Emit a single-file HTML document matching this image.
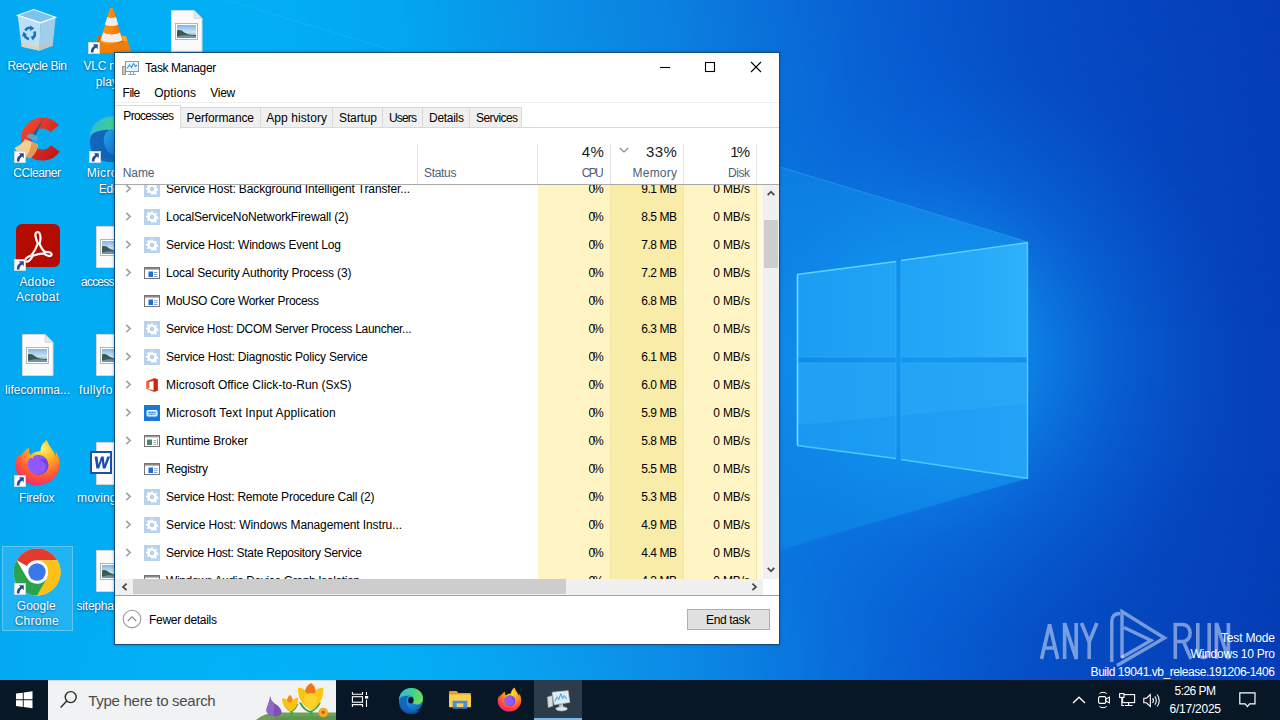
<!DOCTYPE html>
<html><head><meta charset="utf-8"><title>Task Manager</title>
<style>
*{box-sizing:border-box;margin:0;padding:0}
html,body{width:1280px;height:720px;overflow:hidden}
body{font-family:"Liberation Sans",sans-serif;position:relative;background:#0a6fdc;color:#000}
.layer{position:absolute;left:0;top:0;width:1280px;height:720px}
.t{position:absolute;white-space:pre;display:block}
.b{position:absolute;display:block}
svg{position:absolute;overflow:visible}
.dl{text-shadow:0 1px 2px rgba(0,20,60,.45),0 0 2px rgba(0,20,60,.3)}
</style></head>
<body>

<svg width="0" height="0" style="position:absolute"><defs>
<g id="i-gear"><rect width="16" height="16" fill="#b9d3ef"/>
<path fill="#fff" d="M7 2.6h2l.35 1.5 1 .42 1.3-.82 1.42 1.42-.82 1.3.42 1 1.5.35v2l-1.5.35-.42 1 .82 1.3-1.42 1.42-1.3-.82-1 .42L9 13.400H7l-.35-1.5-1-.42-1.3.82-1.420-1.420.82-1.300-.42-1-1.500-.35V7l1.500-.35.42-1-.82-1.300L4.350 3l1.300.82 1-.42z"/>
<circle cx="8" cy="8" r="2" fill="#9db4cc"/><circle cx="8" cy="8" r="1" fill="#dfe8f2"/></g>
<g id="i-win"><rect x=".5" y="2.500" width="15" height="11" fill="#fff" stroke="#757575"/><rect x="1" y="3" width="14" height="1.600" fill="#8a8a8a"/>
<rect x="4.500" y="6.500" width="4.500" height="5.500" fill="#1d6fd0"/><path d="M10 7.500h3.500M10 9.500h3.500M10 11.500h3.500" stroke="#8fa5c0" stroke-width="1"/></g>
<g id="i-broker"><rect x=".5" y="2.500" width="15" height="11" fill="#fff" stroke="#757575"/><rect x="1" y="3" width="14" height="1.400" fill="#9a9a9a"/>
<rect x="3" y="6.500" width="5" height="5.500" fill="#4f8474"/><path d="M9.500 7.500h2.500M9.500 9.500h2.500M9.500 11.500h2.500M13.500 6v6" stroke="#9aa7b4" stroke-width="1"/></g>
<g id="i-kbd"><rect width="16" height="16" fill="#1878d7"/><rect x="3" y="5.500" width="10" height="5.500" rx=".8" fill="#9fd0ff" stroke="#fff" stroke-width="1"/><path d="M4.500 7.500h7M5.500 9.300h5" stroke="#1878d7" stroke-width=".9" stroke-dasharray="1 .7"/></g>
<g id="i-office"><path d="M2.500 4.200L9.800 1.200l3.900 1.100v11.400l-3.900 1.100-7.300-2.800 7.100.9V3.900L5.200 5v6l-2.700 1z" fill="#e2401c"/><path d="M9.800 1.200l3.900 1.100v11.400l-3.900 1.100z" fill="#c8290f"/><path d="M2.500 4.200L5.200 5v6l-2.700 1z" fill="#f0682e"/></g>
<g id="i-tm"><rect x="3.500" y="1.500" width="13" height="10" fill="#eaf3fb" stroke="#8e9aa6"/><path d="M5 8.500l2.500-3.500 2 2.500 2-4 2 3 1.500-1.500" fill="none" stroke="#3a9bd8" stroke-width="1.100"/><path d="M6 14.500h8M8.500 12v2.500M11.500 12v2.500" stroke="#9aa4ad" stroke-width="1.200"/><rect x=".5" y="6.500" width="3" height="8" fill="#cfc7b6" stroke="#8b8579" stroke-width=".8"/></g>

<linearGradient id="g-edge1" x1="0" y1="0" x2="1" y2="1"><stop offset="0" stop-color="#35c1f1"/><stop offset=".5" stop-color="#1b8fe0"/><stop offset="1" stop-color="#0c59a4"/></linearGradient>
<linearGradient id="g-edge2" x1="0" y1="0" x2="1" y2=".3"><stop offset="0" stop-color="#2fb8e8"/><stop offset=".55" stop-color="#3ecf8e"/><stop offset="1" stop-color="#6fdc5a"/></linearGradient>
<g id="i-edge"><circle cx="13" cy="13" r="12" fill="url(#g-edge1)"/>
<path d="M1.200 11.500C2.500 5 7.500 1 13.500 1c6.500 0 11.500 4.500 11.500 10.500 0 3.500-2.500 6-6 6-2.500 0-4-1-4-2.300 0-1 1-1.500 1-3.200 0-2-2-3.500-4.500-3.500-4.500 0-8.500 3-10.300 3z" fill="url(#g-edge2)"/>
<path d="M9 11.500c-1 3.500 0 8 3.500 10.700 3 2.200 7 2.300 10 .3-2 3-5.500 4.500-9.500 4.500C7.500 27 3 24 1.500 18.500.8 15.500 1.200 13 2.200 11 4 9.200 7.500 8.500 11.500 8.500c-1.200.7-2 1.600-2.500 3z" fill="#0f5fb3" fill-opacity=".85"/>
<ellipse cx="12.800" cy="13.300" rx="2.600" ry="3.200" fill="#081725"/></g>
<g id="i-explorer"><path d="M0 1.500C0 .7.700 0 1.500 0h6.300l2 2.200H21.500c.8 0 1.500.7 1.500 1.500V5H0z" fill="#e0a526"/><rect x="0" y="3.800" width="23" height="14.200" rx=".8" fill="#fbd04f"/><path d="M3.800 18v-7.200h15.400V18" fill="#4a90d8"/><rect x="8" y="13.800" width="7" height="4.200" fill="#fbd04f"/><rect x="3.800" y="18" width="15.400" height="1.800" fill="#3577bd"/></g>
<radialGradient id="g-ff1" cx=".6" cy=".25" r=".9"><stop offset="0" stop-color="#ffe226"/><stop offset=".35" stop-color="#ff9b17"/><stop offset=".7" stop-color="#ff3f46"/><stop offset="1" stop-color="#e31587"/></radialGradient>
<g id="i-firefox"><path d="M12.500 24.600c6.500 0 11.800-5 11.800-11.300 0-3-1-5.200-2.200-6.800.2 1.200.1 2-.1 2.600C21 5.500 18.500 3.800 17.500.4c-2.500 1.500-3.500 4-3.400 6C12 6.300 10 7 8.800 8.500 8 7.500 7.800 6 8 4.500 5.500 6 3.500 8.200 2.600 10.200c0-1 .1-1.800.3-2.500C1.400 9.500.7 11.500.7 13.700c0 6 5.300 10.900 11.800 10.900z" fill="url(#g-ff1)"/>
<circle cx="13" cy="13.700" r="5.300" fill="#7542e5"/><path d="M8.200 10.500c1.500-1.600 4-2.300 6.300-1.700 1.500.4 2.500 1.300 3 2.200-1.500-.7-3-.5-4 .3 2 .2 3.500 1.500 3.500 3.400 0 2.300-2 3.800-4.300 3.800-3 0-5.400-2.200-5.400-5.200 0-1 .3-2 .9-2.800z" fill="#9059ff"/>
<path d="M7.500 9.800c.5-.9 1.500-1.300 2.800-1.100-.4.500-.5 1-.4 1.500-.8-.3-1.600-.4-2.400-.4z" fill="#ff980e"/></g>
<g id="i-tmbig"><path d="M5.500 2.500l17-1.700 1.700 12.700-16.500 2.500z" fill="#e8eef3" stroke="#b9c4cc" stroke-width=".8"/><path d="M7.300 4.300l13.800-1.300 1.300 9.300-13.500 2z" fill="#d8ecfa"/><path d="M8.500 12.500l2.300-5 1.700 3 2.200-6.500 2 5.500 1.600-3.500 2.700 4" fill="none" stroke="#3d9ad6" stroke-width="1"/>
<path d="M12.500 16l4.500-.7.400 3.200-4 .8z" fill="#c3ccd3"/><ellipse cx="15.500" cy="20.500" rx="6.200" ry="2.300" fill="#dfe5ea" stroke="#aab4bc" stroke-width=".6"/>
<path d="M.5 7.500l5-1.300.8 11.300-5 1.700z" fill="#d9dde0" stroke="#a8b0b6" stroke-width=".6"/></g>
</defs></svg>

<div id="wall" class="layer"><svg id="wallsvg" style="left:0;top:0" width="1280" height="720" viewBox="0 0 1280 720">
<defs>
<linearGradient id="w-base" gradientUnits="userSpaceOnUse" x1="0" y1="0" x2="1280" y2="0">
<stop offset="0" stop-color="#03aaf2"/><stop offset=".16" stop-color="#02aff5"/><stop offset=".31" stop-color="#04abf3"/><stop offset=".42" stop-color="#0a9bec"/>
<stop offset=".52" stop-color="#0c8de7"/><stop offset=".625" stop-color="#0a76df"/><stop offset=".72" stop-color="#0862d6"/><stop offset=".80" stop-color="#0654cb"/><stop offset=".9" stop-color="#0549c1"/><stop offset="1" stop-color="#0540b8"/></linearGradient>
<linearGradient id="w-topv" gradientUnits="userSpaceOnUse" x1="0" y1="0" x2="0" y2="330"><stop offset="0" stop-color="#0536b4" stop-opacity=".22"/><stop offset=".5" stop-color="#0536b4" stop-opacity=".13"/><stop offset="1" stop-color="#0536b4" stop-opacity="0"/></linearGradient>
<linearGradient id="w-toph" gradientUnits="userSpaceOnUse" x1="300" y1="0" x2="900" y2="0"><stop offset="0" stop-color="#000"/><stop offset="1" stop-color="#fff"/></linearGradient>
<mask id="w-topm"><rect x="0" y="0" width="1280" height="720" fill="url(#w-toph)"/></mask>
<radialGradient id="w-glow" gradientUnits="userSpaceOnUse" cx="925" cy="355" r="300" gradientTransform="translate(925 355) scale(1.05 1) translate(-925 -355)">
<stop offset="0" stop-color="#1199f0" stop-opacity=".95"/><stop offset=".35" stop-color="#0f8ceb" stop-opacity=".75"/><stop offset=".62" stop-color="#0c78e2" stop-opacity=".38"/><stop offset="1" stop-color="#0a60d6" stop-opacity="0"/></radialGradient>
<linearGradient id="w-beam" gradientUnits="userSpaceOnUse" x1="1030" y1="0" x2="500" y2="0"><stop offset="0" stop-color="#18a0f4" stop-opacity=".55"/><stop offset=".4" stop-color="#129af0" stop-opacity=".36"/><stop offset="1" stop-color="#0c9cf0" stop-opacity=".0"/></linearGradient>
<linearGradient id="w-botv" gradientUnits="userSpaceOnUse" x1="0" y1="470" x2="0" y2="720"><stop offset="0" stop-color="#042fa8" stop-opacity="0"/><stop offset="1" stop-color="#042fa8" stop-opacity=".2"/></linearGradient>
<linearGradient id="w-both" gradientUnits="userSpaceOnUse" x1="760" y1="0" x2="1150" y2="0"><stop offset="0" stop-color="#000"/><stop offset="1" stop-color="#fff"/></linearGradient>
<mask id="w-botm"><rect x="0" y="0" width="1280" height="720" fill="url(#w-both)"/></mask>
<radialGradient id="w-bl" cx=".5" cy=".5" r=".5"><stop offset="0" stop-color="#04b8f8" stop-opacity=".5"/><stop offset="1" stop-color="#04b8f8" stop-opacity="0"/></radialGradient>
<linearGradient id="w-p1" gradientUnits="userSpaceOnUse" x1="797" y1="0" x2="1028" y2="0"><stop offset="0" stop-color="#1b9df3"/><stop offset=".75" stop-color="#26a9f8"/><stop offset="1" stop-color="#2fb2fb"/></linearGradient>
<linearGradient id="w-p2" gradientUnits="userSpaceOnUse" x1="797" y1="0" x2="1028" y2="0"><stop offset="0" stop-color="#1898f1"/><stop offset="1" stop-color="#22a3f6"/></linearGradient>
</defs>
<rect width="1280" height="720" fill="url(#w-base)"/>
<rect width="1280" height="330" fill="url(#w-topv)" mask="url(#w-topm)"/>
<rect y="470" width="1280" height="250" fill="url(#w-botv)" mask="url(#w-botm)"/>
<ellipse cx="925" cy="355" rx="315" ry="300" fill="url(#w-glow)"/>
<ellipse cx="330" cy="720" rx="330" ry="160" fill="url(#w-bl)"/>
<path d="M1028 242L400 53v-60L1028 242z" fill="#fff" fill-opacity="0"/>
<path d="M1028 242L300 22V686L1028 478z" fill="url(#w-beam)"/>
<path d="M1028 242L200 -8" stroke="#39b4fa" stroke-opacity=".35" stroke-width="1.200" fill="none"/>
<path d="M1028 478L640 590" stroke="#2aa6f5" stroke-opacity=".18" stroke-width="1.200" fill="none"/>
<!-- logo panes -->
<g stroke-linejoin="miter">
<path d="M797 274.500L896 261.500V357H797z" fill="url(#w-p1)"/>
<path d="M901 260.500L1028 242.500V357H901z" fill="url(#w-p1)"/>
<path d="M797 363H896V458.500L797 445.500z" fill="url(#w-p2)"/>
<path d="M901 363H1028V478.500L901 459.500z" fill="url(#w-p2)"/>
<path d="M797 425L896 416V363H797zM901 415.500L1028 404V363H901z" fill="#35b0fa" fill-opacity=".35"/>
<path d="M797.500 274.500V445.500" stroke="#6fe0ff" stroke-width="1.600" fill="none"/>
<path d="M797 274.500L896 261.500M901 260.500L1028 242.500" stroke="#5fd2ff" stroke-width="1.400" fill="none"/>
<path d="M1027.500 242.500V478.500" stroke="#55ccff" stroke-width="1.400" fill="none"/>
<path d="M797 445.500L896 458.500M901 459.500L1028 478.500" stroke="#4cc8ff" stroke-width="1.400" fill="none"/>
<path d="M797 357H896M901 357H1028M797 363H896M901 363H1028" stroke="#3fb8fb" stroke-width=".8" stroke-opacity=".6" fill="none"/>
<path d="M896 261.500V458.500M901 260.500V459.500" stroke="#3fb8fb" stroke-width=".8" stroke-opacity=".6" fill="none"/>
</g>
</svg></div>
<div id="desktop" class="layer">
<svg width="0" height="0" style="position:absolute"><defs>
<linearGradient id="g-sky" x1="0" y1="0" x2="0" y2="1"><stop offset="0" stop-color="#7fb6e6"/><stop offset=".55" stop-color="#cfe3f1"/><stop offset="1" stop-color="#5d8aa8"/></linearGradient>
<g id="d-imgfile"><path d="M.5 .5h22.500l8 8v33H.5z" fill="#fbfbfb" stroke="#d4d8dc" stroke-width="1"/><path d="M23 .5v8h8z" fill="#e3e6e9" stroke="#cfd3d7" stroke-width=".8"/>
<rect x="4.500" y="13.500" width="22" height="16" fill="#fff" stroke="#a9b1b8" stroke-width=".9"/><rect x="6" y="15" width="19" height="13" fill="url(#g-sky)"/>
<path d="M6 20.500c2.500-1 4.500-.3 7 1.700s6.500 2.800 12 2.900V28H6z" fill="#3b5a52"/><path d="M6 26.500c5-1.500 12-1.500 19-.5V28H6z" fill="#6f93a8"/></g>
<g id="d-short"><rect x=".4" y=".4" width="11.200" height="11.200" fill="#fff" stroke="#d0d9e2" stroke-width=".8"/><path d="M4.800 2.200h5V7.200L8.200 5.600C6.300 7 5.300 8.500 5.500 10.500H2.900C2.500 7.500 3.900 5.300 6.400 3.800z" fill="#1d4f9c"/></g>
<linearGradient id="g-bin" x1="0" y1="0" x2="1" y2="0"><stop offset="0" stop-color="#c4d9ea"/><stop offset=".5" stop-color="#eef5fb"/><stop offset="1" stop-color="#b9d0e4"/></linearGradient>
<g id="d-bin"><path d="M.6 6.200L16.900 .600 38.700 8.200 23.500 13.800z" fill="#8fc8ee" fill-opacity=".85" stroke="#e4f2fb" stroke-width="1.100"/>
<path d="M.6 6.200L23.500 13.800 22.500 41.700 4.700 37.700z" fill="#d2e6f4" fill-opacity=".9"/>
<path d="M23.500 13.800L38.700 8.200 35.700 36.700 22.500 41.700z" fill="#b3d1e8" fill-opacity=".9"/>
<path d="M4.200 33l18.400 4.200-.1 4.500L4.700 37.700z" fill="#f0c8a8" fill-opacity=".55"/><path d="M22.600 37.200L36.100 32.500l-.4 4.200-13.200 5z" fill="#e6b998" fill-opacity=".45"/>
<path d="M.6 6.200L23.500 13.800 38.700 8.200" fill="none" stroke="#f4fafe" stroke-width="1.200"/>
<g fill="none" stroke="#1b70c5" stroke-width="2.600"><path d="M8.300 21.500a5.400 5.400 0 0 1 6.500-2.300"/><path d="M17.400 22.500a5.400 5.400 0 0 1-2 6.500"/><path d="M12 30a5.400 5.400 0 0 1-4.600-4.800"/></g>
<g fill="#1b70c5"><path d="M13.500 16.500l4 3-4.500 2.500z"/><path d="M18.500 27l-2.500 4.500-2.500-4z"/><path d="M5 27.500l1.500-5 3.500 3.500z"/></g></g>
<linearGradient id="g-cone" x1="0" y1="0" x2="1" y2="0"><stop offset="0" stop-color="#f39a1d"/><stop offset=".45" stop-color="#ff8a0c"/><stop offset="1" stop-color="#e6650a"/></linearGradient>
<g id="d-vlc"><path d="M5 30h28l5.500 17H.5z" fill="#f07f0a"/><path d="M5 30h28l1.600 5H3.400z" fill="#f9a32a"/><path d="M.5 47L5 30l3 0L5.500 47z" fill="#d96405"/>
<path d="M16.600 3.500c.5-2.300 3.500-2.300 4 0L30 35.500c-3 3.800-19.800 3.800-22.800 0z" fill="url(#g-cone)"/>
<path d="M14.200 11c2.500 1.200 6.300 1.200 8.800 0l2.200 7.600c-3.500 2-9.700 2-13.200 0z" fill="#efeeec"/><path d="M10.200 26.500c4.500 2.500 12.300 2.500 16.800 0l2.400 7.800c-5 3-16.600 3-21.600 0z" fill="#efeeec"/></g>
<linearGradient id="g-cc" x1="0" y1="0" x2="1" y2="1"><stop offset="0" stop-color="#f2462e"/><stop offset="1" stop-color="#c2181a"/></linearGradient>
<g id="d-cc"><path d="M40.600 11.700A16 16 0 1 0 41.300 31.500" fill="none" stroke="url(#g-cc)" stroke-width="11"/>
<path d="M29.500 1L20.500 21l-3-1.500z" fill="#1f5f8e"/><path d="M13.500 18c3-2 8-1 10.500 2.500L22.500 24.500l-10-4.500z" fill="#5aa3d6"/>
<path d="M11 22L24 27.500c-.5 5-3 10-7.500 13.500C10.500 40 4 36.500.5 31c4.500-2 8.500-5 10.500-9z" fill="#f3cf97"/><path d="M17.500 25l6.500 2.500c-.5 5-3 10-7.500 13.500-1.500-.3-3-.7-4.500-1.300 3-4 5-9 5.500-14.700z" fill="#e29a52"/></g>
<g id="d-adobe"><rect x="0" y="0" width="44" height="43" rx="6" fill="#b30b00"/><path d="M21.500 8c-1.500 0-2.300 1.500-2 4 .3 2.500 1.200 5 2.300 7.500-1.500 4.500-4 9-6.500 12-3 1-5.500 2.500-6 4.200-.3 1.500 1 2.500 2.500 1.800 1.800-.8 3.500-3 5-5.800 3.500-1.200 7.500-2 11-2.300 2 1.800 4.200 2.800 6 2.600 1.500-.2 2.200-1.300 1.500-2.500-.8-1.300-3.500-1.800-6.800-1.700-2-2-3.700-4.800-5-7.800 1-3.500 1.300-7 .5-9.500-.4-1.500-1.300-2.500-2.500-2.500z" fill="none" stroke="#fff" stroke-width="2.200" stroke-linejoin="round"/></g>
<radialGradient id="g-ffd" cx=".62" cy=".2" r=".95"><stop offset="0" stop-color="#fff36b"/><stop offset=".3" stop-color="#ffb21f"/><stop offset=".62" stop-color="#ff5a36"/><stop offset="1" stop-color="#e31587"/></radialGradient>
<g id="d-firefox"><path d="M22 45c12 0 21.700-9.200 21.700-20.800 0-5.500-1.800-9.600-4-12.500.4 2.200.2 3.700-.2 4.800C37.600 10 33 7 31.200.7 26.600 3.500 24.800 8 25 11.700c-3.900-.2-7.600 1.100-9.800 3.900-1.500-1.800-1.800-4.600-1.500-7.400C9.100 11 5.400 15 3.800 18.700c0-1.800.2-3.300.6-4.600C1.600 17.400.3 21.100.3 25.100.3 36.200 10 45 22 45z" fill="url(#g-ffd)"/>
<circle cx="23" cy="25.200" r="9.800" fill="#7542e5"/><path d="M14 19.300c2.800-2.900 7.400-4.200 11.600-3.100 2.800.7 4.600 2.400 5.500 4-2.800-1.300-5.500-.9-7.400.6 3.700.4 6.500 2.800 6.500 6.300 0 4.200-3.700 7-7.900 7-5.500 0-10-4-10-9.600 0-1.800.6-3.700 1.700-5.200z" fill="#9059ff"/>
<path d="M13.500 18c1-1.700 2.800-2.400 5.200-2-.7.900-.9 1.800-.7 2.800-1.500-.6-3-.8-4.500-.8z" fill="#ffb01f"/></g>
<g id="d-word"><path d="M6.500 .5h20l8 8v34h-28z" fill="#fbfbfb" stroke="#d0d4d8"/><path d="M26.500 .5v8h8z" fill="#e3e6e9"/><rect x="1" y="10" width="20" height="21" fill="#fff" stroke="#1c4fa8" stroke-width="2"/><path d="M4.600 14.500l1.800 12h2.700l2.700-7.800 1 7.800h2.700l4.600-12h-2.800l-2.700 8-.9-8h-2.500l-2.800 8-.9-8z" fill="#1c4fa8"/></g>
<g id="d-chrome"><circle cx="24" cy="24" r="23.500" fill="#fff"/><path d="M24 .5a23.500 23.500 0 0 1 20.350 11.750H24a11.750 11.750 0 0 0-10.180 5.870L3.650 12.250A23.500 23.500 0 0 1 24 .5z" fill="#e33b2e"/>
<path d="M44.350 12.250A23.500 23.500 0 0 1 24 47.500l10.180-17.630A11.750 11.750 0 0 0 35.750 24c0-4.300-2.300-8.100-5.800-10.100z" fill="#fbc116" transform="rotate(0)"/><path d="M44.350 12.250H24c4.500 0 8.400 2.500 10.400 6.200l.2 11.500L24 47.500a23.500 23.500 0 0 0 20.350-35.250z" fill="#fbc116"/>
<path d="M3.650 12.250l10.170 17.620A11.750 11.750 0 0 0 24 35.750c4.200 0 7.900-2.200 10-5.600L24 47.500A23.500 23.500 0 0 1 3.650 12.250z" fill="#2ba24c"/>
<circle cx="24" cy="24" r="10.800" fill="#fff"/><circle cx="24" cy="24" r="8.700" fill="#3b78e7"/></g>
<linearGradient id="g-edged1" x1="0" y1="0" x2="1" y2="1"><stop offset="0" stop-color="#35c1f1"/><stop offset=".5" stop-color="#1b8fe0"/><stop offset="1" stop-color="#0c59a4"/></linearGradient>
<linearGradient id="g-edged2" x1="0" y1="0" x2="1" y2=".3"><stop offset="0" stop-color="#2fb8e8"/><stop offset=".55" stop-color="#3ecf8e"/><stop offset="1" stop-color="#6fdc5a"/></linearGradient>
<g id="d-edge"><circle cx="24" cy="24" r="22.500" fill="url(#g-edged1)"/>
<path d="M2 21C4.500 9 13.500 1.500 25 1.500c12 0 21.500 8.500 21.500 19.500 0 6.500-4.500 11-11 11-4.500 0-7.500-2-7.500-4.300 0-2 2-2.800 2-6 0-3.700-3.700-6.500-8.500-6.500C13 15.200 5.500 21 2 21z" fill="url(#g-edged2)"/>
<path d="M16.500 21.500c-2 6.500 0 15 6.500 20 5.500 4 13 4.200 18.500.5-3.700 5.500-10 8.300-17.500 8.300C13.500 50.300 5 44.500 2.500 34.500 1.300 29 2 24.300 4 20.500c3.300-3.300 10-4.600 17.200-4.600-2.200 1.300-3.700 3-4.700 5.600z" fill="#0f5fb3" fill-opacity=".88"/></g>
</defs></svg>

<div class="b" style="left:2px;top:546px;width:71px;height:85px;background:rgba(190,225,250,.16);border:1px solid rgba(200,230,255,.38)"></div>
<svg style="left:17px;top:9px;" width="40" height="43" viewBox="0 0 40 43"><use href="#d-bin"/></svg>
<svg style="left:93px;top:6px;" width="39" height="48" viewBox="0 0 39 48"><use href="#d-vlc"/></svg>
<svg style="left:88px;top:42px;" width="12" height="12" viewBox="0 0 12 12"><use href="#d-short"/></svg>
<svg style="left:171px;top:10px;" width="32" height="42" viewBox="0 0 32 42"><use href="#d-imgfile"/></svg>
<svg style="left:14px;top:117px;" width="48" height="44" viewBox="0 0 48 44"><use href="#d-cc"/></svg>
<svg style="left:13.5px;top:150.5px;" width="12" height="12" viewBox="0 0 12 12"><use href="#d-short"/></svg>
<svg preserveAspectRatio="none" style="left:87.5px;top:115px;" width="48" height="48" viewBox="0 0 48 51"><use href="#d-edge"/></svg>
<svg style="left:88.5px;top:150.5px;" width="12" height="12" viewBox="0 0 12 12"><use href="#d-short"/></svg>
<svg style="left:15.5px;top:224px;" width="44" height="43" viewBox="0 0 44 43"><use href="#d-adobe"/></svg>
<svg style="left:13.5px;top:258.5px;" width="12" height="12" viewBox="0 0 12 12"><use href="#d-short"/></svg>
<svg style="left:96px;top:226px;" width="32" height="42" viewBox="0 0 32 42"><use href="#d-imgfile"/></svg>
<svg style="left:21.5px;top:334px;" width="32" height="42" viewBox="0 0 32 42"><use href="#d-imgfile"/></svg>
<svg style="left:96px;top:334px;" width="32" height="42" viewBox="0 0 32 42"><use href="#d-imgfile"/></svg>
<svg style="left:14.5px;top:438.5px;" width="45" height="46.5" viewBox="0 0 44 45"><use href="#d-firefox"/></svg>
<svg style="left:13.5px;top:474.5px;" width="12" height="12" viewBox="0 0 12 12"><use href="#d-short"/></svg>
<svg style="left:90px;top:442px;" width="37" height="43" viewBox="0 0 37 43"><use href="#d-word"/></svg>
<svg style="left:13px;top:548px;" width="48" height="48" viewBox="0 0 48 48"><use href="#d-chrome"/></svg>
<svg style="left:13.5px;top:582.5px;" width="12" height="12" viewBox="0 0 12 12"><use href="#d-short"/></svg>
<svg style="left:96px;top:550px;" width="32" height="42" viewBox="0 0 32 42"><use href="#d-imgfile"/></svg>
<span class="t dl" style="left:7.50px;top:58.64px;font-size:12px;line-height:15px;color:#fff;letter-spacing:-0.386px;">Recycle Bin</span>
<span class="t dl" style="left:83.50px;top:58.64px;font-size:12px;line-height:15px;color:#fff;letter-spacing:-0.234px;">VLC media</span>
<span class="t dl" style="left:95.70px;top:74.64px;font-size:12px;line-height:15px;color:#fff;letter-spacing:0.122px;">player</span>
<span class="t dl" style="left:13.30px;top:165.64px;font-size:12px;line-height:15px;color:#fff;letter-spacing:-0.429px;">CCleaner</span>
<span class="t dl" style="left:86.80px;top:165.64px;font-size:12px;line-height:15px;color:#fff;letter-spacing:0.314px;">Microsoft</span>
<span class="t dl" style="left:98.70px;top:181.64px;font-size:12px;line-height:15px;color:#fff;letter-spacing:-0.244px;">Edge</span>
<span class="t dl" style="left:19.40px;top:274.64px;font-size:12px;line-height:15px;color:#fff;letter-spacing:0.224px;">Adobe</span>
<span class="t dl" style="left:16.00px;top:289.64px;font-size:12px;line-height:15px;color:#fff;letter-spacing:0.273px;">Acrobat</span>
<span class="t dl" style="left:81.00px;top:274.64px;font-size:12px;line-height:15px;color:#fff;letter-spacing:-0.772px;">access</span>
<span class="t dl" style="left:5.00px;top:382.64px;font-size:12px;line-height:15px;color:#fff;letter-spacing:0.028px;">lifecomma...</span>
<span class="t dl" style="left:79.00px;top:382.64px;font-size:12px;line-height:15px;color:#fff;letter-spacing:0.357px;">fullyfo</span>
<span class="t dl" style="left:19.00px;top:490.64px;font-size:12px;line-height:15px;color:#fff;letter-spacing:-0.198px;">Firefox</span>
<span class="t dl" style="left:77.00px;top:490.64px;font-size:12px;line-height:15px;color:#fff;letter-spacing:0.163px;">moving</span>
<span class="t dl" style="left:16.80px;top:598.64px;font-size:12px;line-height:15px;color:#fff;letter-spacing:0.019px;">Google</span>
<span class="t dl" style="left:14.70px;top:613.64px;font-size:12px;line-height:15px;color:#fff;letter-spacing:0.263px;">Chrome</span>
<span class="t dl" style="left:76.50px;top:598.64px;font-size:12px;line-height:15px;color:#fff;letter-spacing:-0.201px;">sitepha</span></div>
<div id="window" class="layer"><div id="taskmgr" class="b" style="left:114px;top:52px;width:666px;height:593px;background:#fff;border:1px solid #134c7a;box-shadow:0 0 3px rgba(0,40,100,.35)"></div>
<svg style="left:122px;top:60px" width="17" height="16" viewBox="0 0 17 16"><use href="#i-tm"/></svg>
<span class="t " style="left:145.00px;top:60.64px;font-size:12px;line-height:15px;color:#000;letter-spacing:-0.380px;">Task Manager</span>
<svg style="left:655px;top:57px" width="110" height="22" viewBox="0 0 110 22" fill="none" stroke="#000" stroke-width="1.1"><path d="M5 10.5h10"/><rect x="50.5" y="5.5" width="9" height="9"/><path d="M96 5l10 10M106 5l-10 10"/></svg>
<span class="t " style="left:122.60px;top:85.64px;font-size:12px;line-height:15px;color:#000;letter-spacing:-0.548px;">File</span>
<span class="t " style="left:154.20px;top:85.64px;font-size:12px;line-height:15px;color:#000;letter-spacing:0.073px;">Options</span>
<span class="t " style="left:210.20px;top:85.64px;font-size:12px;line-height:15px;color:#000;letter-spacing:-0.232px;">View</span>
<div class="b" style="left:115px;top:102px;width:664px;height:1px;background:#f0f0f0;"></div>
<div class="b" style="left:115px;top:127px;width:664px;height:1px;background:#d9d9d9;"></div>
<div class="b" style="left:180px;top:107px;width:81px;height:21px;background:#f0f0f0;border:1px solid #d9d9d9;border-bottom:1px solid #d9d9d9"></div>
<span class="t " style="left:186.50px;top:110.64px;font-size:12px;line-height:15px;color:#000;letter-spacing:-0.120px;">Performance</span>
<div class="b" style="left:260px;top:107px;width:73px;height:21px;background:#f0f0f0;border:1px solid #d9d9d9;border-bottom:1px solid #d9d9d9"></div>
<span class="t " style="left:266.30px;top:110.64px;font-size:12px;line-height:15px;color:#000;letter-spacing:0.067px;">App history</span>
<div class="b" style="left:332px;top:107px;width:51px;height:21px;background:#f0f0f0;border:1px solid #d9d9d9;border-bottom:1px solid #d9d9d9"></div>
<span class="t " style="left:339.00px;top:110.64px;font-size:12px;line-height:15px;color:#000;letter-spacing:-0.117px;">Startup</span>
<div class="b" style="left:382px;top:107px;width:41px;height:21px;background:#f0f0f0;border:1px solid #d9d9d9;border-bottom:1px solid #d9d9d9"></div>
<span class="t " style="left:389.00px;top:110.64px;font-size:12px;line-height:15px;color:#000;letter-spacing:-0.836px;">Users</span>
<div class="b" style="left:422px;top:107px;width:48px;height:21px;background:#f0f0f0;border:1px solid #d9d9d9;border-bottom:1px solid #d9d9d9"></div>
<span class="t " style="left:429.00px;top:110.64px;font-size:12px;line-height:15px;color:#000;letter-spacing:-0.281px;">Details</span>
<div class="b" style="left:469px;top:107px;width:53px;height:21px;background:#f0f0f0;border:1px solid #d9d9d9;border-bottom:1px solid #d9d9d9"></div>
<span class="t " style="left:476.00px;top:110.64px;font-size:12px;line-height:15px;color:#000;letter-spacing:-0.574px;">Services</span>
<div class="b" style="left:115px;top:105px;width:66px;height:24px;background:#fff;border:1px solid #d9d9d9;border-bottom:none;border-left:none"></div>
<span class="t " style="left:123.30px;top:108.64px;font-size:12px;line-height:15px;color:#000;letter-spacing:-0.666px;">Processes</span>
<span class="t " style="left:122.80px;top:165.64px;font-size:12px;line-height:15px;color:#4c607a;letter-spacing:-0.105px;">Name</span>
<span class="t " style="left:424.00px;top:165.64px;font-size:12px;line-height:15px;color:#4c607a;letter-spacing:-0.306px;">Status</span>
<div class="b" style="left:417px;top:144px;width:1px;height:40px;background:#e2e2e2;"></div>
<div class="b" style="left:537px;top:144px;width:1px;height:40px;background:#e2e2e2;"></div>
<div class="b" style="left:610px;top:144px;width:1px;height:40px;background:#e2e2e2;"></div>
<div class="b" style="left:683px;top:144px;width:1px;height:40px;background:#e2e2e2;"></div>
<div class="b" style="left:756px;top:144px;width:1px;height:40px;background:#e2e2e2;"></div>
<span class="t " style="left:581.80px;top:141.60px;font-size:15px;line-height:19px;color:#1a1a1a;letter-spacing:0.312px;">4%</span>
<span class="t " style="left:581.80px;top:165.64px;font-size:12px;line-height:15px;color:#4c607a;letter-spacing:-1.672px;">CPU</span>
<span class="t " style="left:646.00px;top:141.60px;font-size:15px;line-height:19px;color:#1a1a1a;letter-spacing:0.434px;">33%</span>
<span class="t " style="left:632.60px;top:165.64px;font-size:12px;line-height:15px;color:#4c607a;letter-spacing:0.191px;">Memory</span>
<span class="t " style="left:730.20px;top:141.60px;font-size:15px;line-height:19px;color:#1a1a1a;letter-spacing:-1.888px;">1%</span>
<span class="t " style="left:728.00px;top:165.64px;font-size:12px;line-height:15px;color:#4c607a;letter-spacing:-0.448px;">Disk</span>
<svg style="left:619px;top:147px" width="10" height="6" viewBox="0 0 10 6" fill="none" stroke="#8a8a8a" stroke-width="1.2"><path d="M.8 1l4.2 4 4.2-4"/></svg>
<div class="b" style="left:115px;top:184px;width:664px;height:1px;background:#a9a9a9;"></div>
<div class="layer" style="clip-path:inset(185px 517px 141px 115px)">
<div class="b" style="left:538px;top:185px;width:73px;height:395px;background:#fff4c4;"></div>
<div class="b" style="left:611px;top:185px;width:73px;height:395px;background:#f9eca8;"></div>
<div class="b" style="left:684px;top:185px;width:73px;height:395px;background:#fff4c4;"></div>
<div class="b" style="left:757px;top:185px;width:6px;height:395px;background:#fff9e3;"></div>
<div class="b" style="left:610px;top:185px;width:1px;height:395px;background:#f1e4a5;"></div>
<div class="b" style="left:683px;top:185px;width:1px;height:395px;background:#f1e4a5;"></div>
<div class="b" style="left:756px;top:185px;width:1px;height:395px;background:#f1e4a5;"></div>
<svg style="left:124.5px;top:183.7px" width="7" height="10" viewBox="0 0 7 10" fill="none" stroke="#9c9c9c" stroke-width="1.5"><path d="M1.2 .9L5.2 4.6 1.2 8.3"/></svg>
<svg style="left:144px;top:181.2px" width="16" height="16" viewBox="0 0 16 16"><use href="#i-gear"/></svg>
<span class="t " style="left:166.00px;top:181.64px;font-size:12px;line-height:15px;color:#000;letter-spacing:-0.130px;">Service Host: Background Intelligent Transfer...</span>
<span class="t " style="left:588.40px;top:181.64px;font-size:12px;line-height:15px;color:#000;letter-spacing:-1.944px;">0%</span>
<span class="t " style="left:641.30px;top:181.64px;font-size:12px;line-height:15px;color:#000;letter-spacing:-0.483px;">9.1 MB</span>
<span class="t " style="left:713.20px;top:181.64px;font-size:12px;line-height:15px;color:#000;letter-spacing:-0.109px;">0 MB/s</span>
<svg style="left:124.5px;top:211.7px" width="7" height="10" viewBox="0 0 7 10" fill="none" stroke="#9c9c9c" stroke-width="1.5"><path d="M1.2 .9L5.2 4.6 1.2 8.3"/></svg>
<svg style="left:144px;top:209.2px" width="16" height="16" viewBox="0 0 16 16"><use href="#i-gear"/></svg>
<span class="t " style="left:166.00px;top:209.64px;font-size:12px;line-height:15px;color:#000;letter-spacing:-0.153px;">LocalServiceNoNetworkFirewall (2)</span>
<span class="t " style="left:588.40px;top:209.64px;font-size:12px;line-height:15px;color:#000;letter-spacing:-1.944px;">0%</span>
<span class="t " style="left:641.30px;top:209.64px;font-size:12px;line-height:15px;color:#000;letter-spacing:-0.483px;">8.5 MB</span>
<span class="t " style="left:713.20px;top:209.64px;font-size:12px;line-height:15px;color:#000;letter-spacing:-0.109px;">0 MB/s</span>
<svg style="left:124.5px;top:239.7px" width="7" height="10" viewBox="0 0 7 10" fill="none" stroke="#9c9c9c" stroke-width="1.5"><path d="M1.2 .9L5.2 4.6 1.2 8.3"/></svg>
<svg style="left:144px;top:237.2px" width="16" height="16" viewBox="0 0 16 16"><use href="#i-gear"/></svg>
<span class="t " style="left:166.00px;top:237.64px;font-size:12px;line-height:15px;color:#000;letter-spacing:-0.192px;">Service Host: Windows Event Log</span>
<span class="t " style="left:588.40px;top:237.64px;font-size:12px;line-height:15px;color:#000;letter-spacing:-1.944px;">0%</span>
<span class="t " style="left:641.30px;top:237.64px;font-size:12px;line-height:15px;color:#000;letter-spacing:-0.483px;">7.8 MB</span>
<span class="t " style="left:713.20px;top:237.64px;font-size:12px;line-height:15px;color:#000;letter-spacing:-0.109px;">0 MB/s</span>
<svg style="left:124.5px;top:267.7px" width="7" height="10" viewBox="0 0 7 10" fill="none" stroke="#9c9c9c" stroke-width="1.5"><path d="M1.2 .9L5.2 4.6 1.2 8.3"/></svg>
<svg style="left:144px;top:265.2px" width="16" height="16" viewBox="0 0 16 16"><use href="#i-win"/></svg>
<span class="t " style="left:166.00px;top:265.64px;font-size:12px;line-height:15px;color:#000;letter-spacing:-0.131px;">Local Security Authority Process (3)</span>
<span class="t " style="left:588.40px;top:265.64px;font-size:12px;line-height:15px;color:#000;letter-spacing:-1.944px;">0%</span>
<span class="t " style="left:641.30px;top:265.64px;font-size:12px;line-height:15px;color:#000;letter-spacing:-0.483px;">7.2 MB</span>
<span class="t " style="left:713.20px;top:265.64px;font-size:12px;line-height:15px;color:#000;letter-spacing:-0.109px;">0 MB/s</span>
<svg style="left:144px;top:293.2px" width="16" height="16" viewBox="0 0 16 16"><use href="#i-win"/></svg>
<span class="t " style="left:166.00px;top:293.64px;font-size:12px;line-height:15px;color:#000;letter-spacing:-0.312px;">MoUSO Core Worker Process</span>
<span class="t " style="left:588.40px;top:293.64px;font-size:12px;line-height:15px;color:#000;letter-spacing:-1.944px;">0%</span>
<span class="t " style="left:641.30px;top:293.64px;font-size:12px;line-height:15px;color:#000;letter-spacing:-0.483px;">6.8 MB</span>
<span class="t " style="left:713.20px;top:293.64px;font-size:12px;line-height:15px;color:#000;letter-spacing:-0.109px;">0 MB/s</span>
<svg style="left:124.5px;top:323.7px" width="7" height="10" viewBox="0 0 7 10" fill="none" stroke="#9c9c9c" stroke-width="1.5"><path d="M1.2 .9L5.2 4.6 1.2 8.3"/></svg>
<svg style="left:144px;top:321.2px" width="16" height="16" viewBox="0 0 16 16"><use href="#i-gear"/></svg>
<span class="t " style="left:166.00px;top:321.64px;font-size:12px;line-height:15px;color:#000;letter-spacing:-0.317px;">Service Host: DCOM Server Process Launcher...</span>
<span class="t " style="left:588.40px;top:321.64px;font-size:12px;line-height:15px;color:#000;letter-spacing:-1.944px;">0%</span>
<span class="t " style="left:641.30px;top:321.64px;font-size:12px;line-height:15px;color:#000;letter-spacing:-0.483px;">6.3 MB</span>
<span class="t " style="left:713.20px;top:321.64px;font-size:12px;line-height:15px;color:#000;letter-spacing:-0.109px;">0 MB/s</span>
<svg style="left:124.5px;top:351.7px" width="7" height="10" viewBox="0 0 7 10" fill="none" stroke="#9c9c9c" stroke-width="1.5"><path d="M1.2 .9L5.2 4.6 1.2 8.3"/></svg>
<svg style="left:144px;top:349.2px" width="16" height="16" viewBox="0 0 16 16"><use href="#i-gear"/></svg>
<span class="t " style="left:166.00px;top:349.64px;font-size:12px;line-height:15px;color:#000;letter-spacing:-0.203px;">Service Host: Diagnostic Policy Service</span>
<span class="t " style="left:588.40px;top:349.64px;font-size:12px;line-height:15px;color:#000;letter-spacing:-1.944px;">0%</span>
<span class="t " style="left:641.30px;top:349.64px;font-size:12px;line-height:15px;color:#000;letter-spacing:-0.483px;">6.1 MB</span>
<span class="t " style="left:713.20px;top:349.64px;font-size:12px;line-height:15px;color:#000;letter-spacing:-0.109px;">0 MB/s</span>
<svg style="left:124.5px;top:379.7px" width="7" height="10" viewBox="0 0 7 10" fill="none" stroke="#9c9c9c" stroke-width="1.5"><path d="M1.2 .9L5.2 4.6 1.2 8.3"/></svg>
<svg style="left:144px;top:377.2px" width="16" height="16" viewBox="0 0 16 16"><use href="#i-office"/></svg>
<span class="t " style="left:166.00px;top:377.64px;font-size:12px;line-height:15px;color:#000;letter-spacing:-0.009px;">Microsoft Office Click-to-Run (SxS)</span>
<span class="t " style="left:588.40px;top:377.64px;font-size:12px;line-height:15px;color:#000;letter-spacing:-1.944px;">0%</span>
<span class="t " style="left:641.30px;top:377.64px;font-size:12px;line-height:15px;color:#000;letter-spacing:-0.483px;">6.0 MB</span>
<span class="t " style="left:713.20px;top:377.64px;font-size:12px;line-height:15px;color:#000;letter-spacing:-0.109px;">0 MB/s</span>
<svg style="left:124.5px;top:407.7px" width="7" height="10" viewBox="0 0 7 10" fill="none" stroke="#9c9c9c" stroke-width="1.5"><path d="M1.2 .9L5.2 4.6 1.2 8.3"/></svg>
<svg style="left:144px;top:405.2px" width="16" height="16" viewBox="0 0 16 16"><use href="#i-kbd"/></svg>
<span class="t " style="left:166.00px;top:405.64px;font-size:12px;line-height:15px;color:#000;letter-spacing:0.147px;">Microsoft Text Input Application</span>
<span class="t " style="left:588.40px;top:405.64px;font-size:12px;line-height:15px;color:#000;letter-spacing:-1.944px;">0%</span>
<span class="t " style="left:641.30px;top:405.64px;font-size:12px;line-height:15px;color:#000;letter-spacing:-0.483px;">5.9 MB</span>
<span class="t " style="left:713.20px;top:405.64px;font-size:12px;line-height:15px;color:#000;letter-spacing:-0.109px;">0 MB/s</span>
<svg style="left:124.5px;top:435.7px" width="7" height="10" viewBox="0 0 7 10" fill="none" stroke="#9c9c9c" stroke-width="1.5"><path d="M1.2 .9L5.2 4.6 1.2 8.3"/></svg>
<svg style="left:144px;top:433.2px" width="16" height="16" viewBox="0 0 16 16"><use href="#i-broker"/></svg>
<span class="t " style="left:166.00px;top:433.64px;font-size:12px;line-height:15px;color:#000;letter-spacing:-0.106px;">Runtime Broker</span>
<span class="t " style="left:588.40px;top:433.64px;font-size:12px;line-height:15px;color:#000;letter-spacing:-1.944px;">0%</span>
<span class="t " style="left:641.30px;top:433.64px;font-size:12px;line-height:15px;color:#000;letter-spacing:-0.483px;">5.8 MB</span>
<span class="t " style="left:713.20px;top:433.64px;font-size:12px;line-height:15px;color:#000;letter-spacing:-0.109px;">0 MB/s</span>
<svg style="left:144px;top:461.2px" width="16" height="16" viewBox="0 0 16 16"><use href="#i-win"/></svg>
<span class="t " style="left:166.00px;top:461.64px;font-size:12px;line-height:15px;color:#000;letter-spacing:-0.288px;">Registry</span>
<span class="t " style="left:588.40px;top:461.64px;font-size:12px;line-height:15px;color:#000;letter-spacing:-1.944px;">0%</span>
<span class="t " style="left:641.30px;top:461.64px;font-size:12px;line-height:15px;color:#000;letter-spacing:-0.483px;">5.5 MB</span>
<span class="t " style="left:713.20px;top:461.64px;font-size:12px;line-height:15px;color:#000;letter-spacing:-0.109px;">0 MB/s</span>
<svg style="left:124.5px;top:491.7px" width="7" height="10" viewBox="0 0 7 10" fill="none" stroke="#9c9c9c" stroke-width="1.5"><path d="M1.2 .9L5.2 4.6 1.2 8.3"/></svg>
<svg style="left:144px;top:489.2px" width="16" height="16" viewBox="0 0 16 16"><use href="#i-gear"/></svg>
<span class="t " style="left:166.00px;top:489.64px;font-size:12px;line-height:15px;color:#000;letter-spacing:-0.235px;">Service Host: Remote Procedure Call (2)</span>
<span class="t " style="left:588.40px;top:489.64px;font-size:12px;line-height:15px;color:#000;letter-spacing:-1.944px;">0%</span>
<span class="t " style="left:641.30px;top:489.64px;font-size:12px;line-height:15px;color:#000;letter-spacing:-0.483px;">5.3 MB</span>
<span class="t " style="left:713.20px;top:489.64px;font-size:12px;line-height:15px;color:#000;letter-spacing:-0.109px;">0 MB/s</span>
<svg style="left:124.5px;top:519.7px" width="7" height="10" viewBox="0 0 7 10" fill="none" stroke="#9c9c9c" stroke-width="1.5"><path d="M1.2 .9L5.2 4.6 1.2 8.3"/></svg>
<svg style="left:144px;top:517.2px" width="16" height="16" viewBox="0 0 16 16"><use href="#i-gear"/></svg>
<span class="t " style="left:166.00px;top:517.64px;font-size:12px;line-height:15px;color:#000;letter-spacing:-0.100px;">Service Host: Windows Management Instru...</span>
<span class="t " style="left:588.40px;top:517.64px;font-size:12px;line-height:15px;color:#000;letter-spacing:-1.944px;">0%</span>
<span class="t " style="left:641.30px;top:517.64px;font-size:12px;line-height:15px;color:#000;letter-spacing:-0.483px;">4.9 MB</span>
<span class="t " style="left:713.20px;top:517.64px;font-size:12px;line-height:15px;color:#000;letter-spacing:-0.109px;">0 MB/s</span>
<svg style="left:124.5px;top:547.7px" width="7" height="10" viewBox="0 0 7 10" fill="none" stroke="#9c9c9c" stroke-width="1.5"><path d="M1.2 .9L5.2 4.6 1.2 8.3"/></svg>
<svg style="left:144px;top:545.2px" width="16" height="16" viewBox="0 0 16 16"><use href="#i-gear"/></svg>
<span class="t " style="left:166.00px;top:545.64px;font-size:12px;line-height:15px;color:#000;letter-spacing:-0.291px;">Service Host: State Repository Service</span>
<span class="t " style="left:588.40px;top:545.64px;font-size:12px;line-height:15px;color:#000;letter-spacing:-1.944px;">0%</span>
<span class="t " style="left:641.30px;top:545.64px;font-size:12px;line-height:15px;color:#000;letter-spacing:-0.483px;">4.4 MB</span>
<span class="t " style="left:713.20px;top:545.64px;font-size:12px;line-height:15px;color:#000;letter-spacing:-0.109px;">0 MB/s</span>
<svg style="left:144px;top:573.2px" width="16" height="16" viewBox="0 0 16 16"><use href="#i-win"/></svg>
<span class="t " style="left:166.00px;top:573.64px;font-size:12px;line-height:15px;color:#000;letter-spacing:-0.365px;">Windows Audio Device Graph Isolation</span>
<span class="t " style="left:588.40px;top:573.64px;font-size:12px;line-height:15px;color:#000;letter-spacing:-1.944px;">0%</span>
<span class="t " style="left:641.30px;top:573.64px;font-size:12px;line-height:15px;color:#000;letter-spacing:-0.483px;">4.3 MB</span>
<span class="t " style="left:713.20px;top:573.64px;font-size:12px;line-height:15px;color:#000;letter-spacing:-0.109px;">0 MB/s</span>
</div>
<div class="b" style="left:763px;top:185px;width:16px;height:394px;background:#f0f0f0;"></div>
<div class="b" style="left:764px;top:220px;width:14px;height:48px;background:#cdcdcd;"></div>
<svg style="left:766.5px;top:190px" width="8" height="6" viewBox="0 0 8 6" fill="none" stroke="#4a4a4a" stroke-width="1.8"><path d="M.7 5.2L4 1.7l3.300 3.500"/></svg>
<svg style="left:766.5px;top:566.5px" width="8" height="6" viewBox="0 0 8 6" fill="none" stroke="#4a4a4a" stroke-width="1.8"><path d="M.7 .8L4 4.3 7.3 .8"/></svg>
<div class="b" style="left:115px;top:579px;width:648px;height:16px;background:#f0f0f0;"></div>
<div class="b" style="left:763px;top:579px;width:16px;height:16px;background:#fff;"></div>
<div class="b" style="left:133px;top:579px;width:433px;height:15px;background:#cdcdcd;"></div>
<svg style="left:120.500px;top:582.500px" width="7" height="8" viewBox="0 0 7 8" fill="none" stroke="#4a4a4a" stroke-width="1.800"><path d="M5.600 .6L2 3.900l3.600 3.300"/></svg>
<svg style="left:750.5px;top:582.5px" width="7" height="8" viewBox="0 0 7 8" fill="none" stroke="#4a4a4a" stroke-width="1.8"><path d="M1.4 .6L5 3.9 1.400 7.200"/></svg>
<div class="b" style="left:115px;top:595px;width:664px;height:1px;background:#a0a0a0;"></div>
<svg style="left:122px;top:609px" width="20" height="20" viewBox="0 0 20 20" fill="none"><circle cx="10" cy="10" r="8.8" stroke="#9a9a9a" stroke-width="1.1" fill="#fff"/><path d="M5.8 12l4.2-4.2 4.2 4.2" stroke="#8a8a8a" stroke-width="1.2"/></svg>
<span class="t " style="left:149.00px;top:612.64px;font-size:12px;line-height:15px;color:#000;letter-spacing:-0.281px;">Fewer details</span>
<div class="b" style="left:687px;top:609px;width:83px;height:21px;background:#e1e1e1;border:1px solid #adadad"></div>
<span class="t " style="left:706.00px;top:612.64px;font-size:12px;line-height:15px;color:#000;letter-spacing:-0.358px;">End task</span></div>
<div id="overlays" class="layer"><svg style="left:1036px;top:606px" width="200" height="68" viewBox="1036 606 200 68" fill="none" stroke="#fff" stroke-opacity=".46" stroke-width="3.600" stroke-linejoin="miter">
<path d="M1041.500 659L1049.600 624.500l8.100 34.500M1044.500 648h10.500"/>
<path d="M1064.600 659v-36l11.600 36v-36"/>
<path d="M1081.500 623l7.700 19 7.700-19M1089.200 642v17"/>
<path d="M1120 613.500c-5.500 0-8.200 2.500-8.200 8V662" stroke-width="3.400"/>
<path d="M1122 658V611.500l42.500 26.500-47.500 27.500" stroke-width="3.400"/>
<path d="M1124 627.500l27 13-29.500 17" stroke-width="3.400"/>
<path d="M1175.300 659v-34.500h7c10.500 0 10.500 17 0 17h-7M1183.500 641.500l7.500 17.500"/>
<path d="M1197.800 623v27.500c0 9.500 11.400 9.500 11.400 0V623"/>
<path d="M1216.400 659v-36l12 36v-36"/>
</svg>
<span class="t " style="left:1221.00px;top:630.64px;font-size:12px;line-height:15px;color:#fff;letter-spacing:-0.170px;">Test Mode</span>
<span class="t " style="left:1190.60px;top:646.64px;font-size:12px;line-height:15px;color:#fff;letter-spacing:-0.229px;">Windows 10 Pro</span>
<span class="t " style="left:1090.60px;top:664.64px;font-size:12px;line-height:15px;color:#fff;letter-spacing:-0.458px;">Build 19041.vb_release.191206-1406</span></div>
<div id="taskbar" class="layer"><div class="b" style="left:0px;top:680px;width:1280px;height:40px;background:#081725;"></div>
<svg style="left:16px;top:691px" width="17" height="18" viewBox="0 0 17 18"><path fill="#fff" d="M0 2.600l6.800-.95v6.700H0zM7.700 1.500L16.500.300v8.050H7.700zM0 9.250h6.800v6.700L0 15zM7.700 9.250h8.800v8.050l-8.800-1.200z"/></svg>
<div class="b" style="left:48px;top:680px;width:288px;height:40px;background:#f1f2f3;border-top:1px solid #d5d9dc"></div>
<svg style="left:58px;top:687px" width="22" height="22" viewBox="0 0 22 22" fill="none" stroke="#2b2b2b" stroke-width="1.4"><circle cx="12.7" cy="10.1" r="5.5"/><path d="M8.800 14.100L2.600 20.400"/></svg>
<span class="t " style="left:88.30px;top:690.60px;font-size:15px;line-height:19px;color:#4b4b4b;letter-spacing:-0.288px;">Type here to search</span>
<svg style="left:250px;top:680px" width="86" height="40" viewBox="250 680 86 40">
<path d="M256 720c5-4.500 12-7.500 24-7.500h56v7.500z" fill="#6f9f5c"/>
<path d="M268 720c8-3 18-4 28-3.500l40-.5v4z" fill="#5f944c"/>
<path d="M270.300 696.300c.3 3 1.500 5 4 7 4 2.500 7.500 5.500 7.300 9.500-1 3-5 4.500-9.500 3.300-4-1-6.500-4-5.500-7.500 1.200-4 2.900-7.300 3.700-12.300z" fill="#7b52b5"/>
<path d="M270.300 696.300c.3 3 1.500 5 4 7l-1 13c-4-1-7.500-4.200-6.700-7.700 1.200-4 2.900-7.300 3.700-12.300z" fill="#9068c8"/>
<path d="M290.500 712c-.3 3-.5 5.500-.2 8h2.400c-.3-2.500-.3-5 .1-8z" fill="#3fae3f"/>
<path d="M310 711c-.3 3-.5 6-.2 9h2.700c-.3-3-.3-6 .1-9z" fill="#3fae3f"/>
<path d="M299 702c2 5 5.500 9 11 10.500 5-1.500 8.500-5 11-10l-3 1c-2 4-4.500 6.500-8 7.500-3.500-1.200-6.500-4-8.500-8z" fill="#35a035"/>
<path d="M283 703c1.500 4 4 7.500 8.500 9.500 3.500-2 5.500-5 7-9l-2.500 1c-1 3-2.500 5-4.800 6.200-2.500-1.500-4.500-3.800-6-7z" fill="#35a035"/>
<path d="M282 698.500c2.500-.5 4 .5 5 2 .5-2.500 1.500-4.500 3-5.500 1.500 1.300 2.300 3 2.700 5.500 1.300-2 3-3 5.500-2.800.3 5.500-2 11-7.500 14-5.500-2.500-8.700-7.700-8.700-13.200z" fill="#f9c21a"/>
<path d="M287 700.500c.5-2.500 1.500-4.500 3-5.500 1.500 1.300 2.300 3 2.700 5.500-1 1.500-2 2-2.800 2.500-1-.5-2-1.200-2.900-2.500z" fill="#f08a12"/>
<path d="M298 688c3-.6 5.500.5 7 3 1-3.500 3-6.300 6-7.700 2.500 1.500 4 4 4.700 7.700 2-2.500 4.500-3.500 7.500-3.200.8 8.200-2.500 17.500-11.500 22.500-9.500-4-14-12.500-13.700-22.300z" fill="#fbc515"/>
<path d="M305 691c1-3.500 3-6.300 6-7.700 2.500 1.500 4 4 4.700 7.700-1.200 2.500-3 4-5 4.500-2.500-.5-4.300-2-5.700-4.500z" fill="#f2741a"/>
<path d="M304 697c2-3 4.500-4 7-4s5 1.500 6.500 4.500c0 5-2 9.500-6.500 12.500-5-2.500-7-7-7-13z" fill="#fdd22a"/>
<circle cx="323.200" cy="712.500" r="4.800" fill="#f6a823"/><circle cx="323.200" cy="712.300" r="1.500" fill="#b5540c"/>
</svg>
<svg style="left:351px;top:691px" width="18" height="17" viewBox="0 0 18 17" fill="none" stroke="#fff" stroke-width="1.1"><path d="M1.4 .9V3.200H11.500V.9M1.400 15.900V13.600H11.500v2.300M15.500 .9V4M15.500 8.800V15.900"/><rect x="1.400" y="5.700" width="10.100" height="5.500"/><rect x="14" y="5" width="3.200" height="2.600" fill="#fff" stroke="none"/></svg>
<svg style="left:398px;top:687px" width="26" height="26" viewBox="0 0 26 26"><use href="#i-edge"/></svg>
<svg style="left:448.5px;top:690.5px" width="22" height="18" viewBox="0 0 23 20" preserveAspectRatio="none"><use href="#i-explorer"/></svg>
<svg style="left:497px;top:687px" width="25" height="25" viewBox="0 0 25 25"><use href="#i-firefox"/></svg>
<div class="b" style="left:534px;top:680px;width:48px;height:40px;background:#2c3c4a;"></div>
<div class="b" style="left:534px;top:718px;width:48px;height:2px;background:#76b9ed;"></div>
<svg style="left:546.5px;top:690px" width="23.500" height="22" viewBox="0 0 25 24" preserveAspectRatio="none"><use href="#i-tmbig"/></svg>
<svg style="left:1072px;top:696px" width="14" height="8" viewBox="0 0 14 8" fill="none" stroke="#fff" stroke-width="1.300"><path d="M1 7l6-5.800L13 7"/></svg>
<svg style="left:1097px;top:691px" width="14" height="18" viewBox="0 0 14 18" fill="none" stroke="#fff" stroke-width="1.100"><rect x="1.600" y="5.600" width="7.200" height="6.800" rx="1.300"/><path d="M8.800 8l3.600-1.900v5.800L8.800 10z"/><path d="M2.500 2.600C4 .9 8 .9 9.800 2.600M2.500 15.400c1.500 1.700 5.500 1.700 7.300 0" stroke-width="1"/></svg>
<svg style="left:1119px;top:693px" width="17" height="14" viewBox="0 0 17 14" fill="none" stroke="#fff" stroke-width="1.100"><rect x="3.600" y="1.600" width="12" height="8"/><path d="M9.600 9.600v2.800M6 12.500h7.500"/><rect x=".6" y=".6" width="4.400" height="3.800" fill="#081725"/><path d="M2.800 4.400v8.100h2.400" /></svg>
<svg style="left:1143px;top:693px" width="18" height="15" viewBox="0 0 18 15" fill="none" stroke="#fff" stroke-width="1.100"><path d="M.8 5.200h2.700L7.300 1.600v11.800L3.500 9.800H.8z"/><path d="M9.600 5.200c1 1.300 1 3.300 0 4.600M11.800 3.300c2 2.300 2 6.100 0 8.400M14 1.500c3 3.300 3 8.700 0 12"/></svg>
<span class="t " style="left:1174.50px;top:683.64px;font-size:12px;line-height:15px;color:#fff;letter-spacing:-0.534px;">5:26 PM</span>
<span class="t " style="left:1169.60px;top:701.64px;font-size:12px;line-height:15px;color:#fff;letter-spacing:-0.249px;">6/17/2025</span>
<svg style="left:1239px;top:692px" width="17" height="17" viewBox="0 0 17 17" fill="none" stroke="#fff" stroke-width="1.200"><path d="M.8 .8h15.200v11H10.600l-2.200 2.800-2.200-2.800H.8z"/></svg></div>
</body></html>
